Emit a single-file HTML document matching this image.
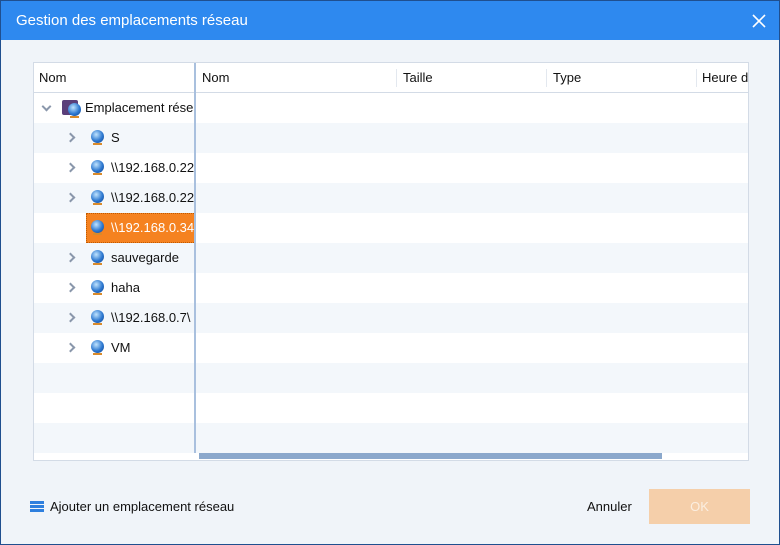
<!DOCTYPE html>
<html><head><meta charset="utf-8"><style>
*{margin:0;padding:0;box-sizing:border-box}
body{width:780px;height:545px;overflow:hidden;font-family:"Liberation Sans",sans-serif;font-size:13px;color:#111}
.win{position:absolute;left:0;top:0;width:780px;height:545px;background:#f0f4f9;border:1px solid #1f4f8f}
.title{position:absolute;left:0;top:0;width:778px;height:39px;background:#2e89ef;color:#fff;font-size:15px;line-height:40px;padding-left:15px}
.x{position:absolute;right:13px;top:13px;width:14px;height:14px}
.tbl{position:absolute;left:32px;top:61px;width:716px;height:399px;background:#fff;border:1px solid #d3dbe6}
.a{position:absolute}
.row{position:absolute;height:30px}
.lt{background:#f3f7fb}
.txt{position:absolute;line-height:30px;white-space:nowrap;overflow:hidden}
.chev{position:absolute;width:7px;height:7px;border-right:2px solid #8a97ab;border-bottom:2px solid #8a97ab;transform:rotate(-45deg)}
.globe{position:absolute;width:13px;height:13px;border-radius:50%;background:radial-gradient(circle at 40% 35%,#bfe3ff,#2d78d0 55%,#0f3f8a)}
.globe:after{content:"";position:absolute;left:2px;top:13px;width:9px;height:2px;background:#d98a2a}
</style></head><body>
<div class="win">
<div class="title">Gestion des emplacements réseau
<svg class="x" viewBox="0 0 14 14"><path d="M1 1L13 13M13 1L1 13" stroke="#fff" stroke-width="1.6"/></svg></div>
<div class="tbl">
<div class="row lt" style="left:0;top:60px;width:714px"></div>
<div class="row lt" style="left:0;top:120px;width:714px"></div>
<div class="row lt" style="left:0;top:180px;width:714px"></div>
<div class="row lt" style="left:0;top:240px;width:714px"></div>
<div class="row lt" style="left:0;top:300px;width:714px"></div>
<div class="row lt" style="left:0;top:360px;width:714px"></div>
<div class="a" style="left:0;top:0;width:714px;height:30px;background:#fff;border-bottom:1px solid #d3dbe6"></div>
<div class="txt" style="left:5px;top:0">Nom</div>
<div class="txt" style="left:168px;top:0">Nom</div>
<div class="a" style="left:362px;top:6px;width:1px;height:18px;background:#e3e8ef"></div>
<div class="txt" style="left:369px;top:0">Taille</div>
<div class="a" style="left:512px;top:6px;width:1px;height:18px;background:#e3e8ef"></div>
<div class="txt" style="left:519px;top:0">Type</div>
<div class="a" style="left:662px;top:6px;width:1px;height:18px;background:#e3e8ef"></div>
<div class="txt" style="left:668px;top:0;width:46px">Heure d</div>
<div class="a" style="left:160px;top:0;width:2px;height:397px;background:#a9c0de"></div>
<div class="a" style="left:0;top:30px;width:160px;height:367px;overflow:hidden">
 <div class="chev" style="left:9px;top:10px;transform:rotate(45deg)"></div>
 <div class="a" style="left:28px;top:7px;width:16px;height:15px;background:#5a3f7a;border-radius:2px"></div>
 <div class="globe" style="left:34px;top:10px"></div>
 <div class="txt" style="left:51px;top:0">Emplacement réseau</div>
 <div class="chev" style="left:33px;top:41px"></div><div class="globe" style="left:57px;top:37px"></div><div class="txt" style="left:77px;top:30px">S</div>
 <div class="chev" style="left:33px;top:71px"></div><div class="globe" style="left:57px;top:67px"></div><div class="txt" style="left:77px;top:60px">\\192.168.0.22</div>
 <div class="chev" style="left:33px;top:101px"></div><div class="globe" style="left:57px;top:97px"></div><div class="txt" style="left:77px;top:90px">\\192.168.0.22</div>
 <div class="a" style="left:52px;top:120px;width:110px;height:30px;background:#f58220;border:1px dotted #c05a00"></div>
 <div class="globe" style="left:57px;top:127px"></div><div class="txt" style="left:77px;top:120px;color:#fff">\\192.168.0.34</div>
 <div class="chev" style="left:33px;top:161px"></div><div class="globe" style="left:57px;top:157px"></div><div class="txt" style="left:77px;top:150px">sauvegarde</div>
 <div class="chev" style="left:33px;top:191px"></div><div class="globe" style="left:57px;top:187px"></div><div class="txt" style="left:77px;top:180px">haha</div>
 <div class="chev" style="left:33px;top:221px"></div><div class="globe" style="left:57px;top:217px"></div><div class="txt" style="left:77px;top:210px">\\192.168.0.7\</div>
 <div class="chev" style="left:33px;top:251px"></div><div class="globe" style="left:57px;top:247px"></div><div class="txt" style="left:77px;top:240px">VM</div>
</div>
<div class="a" style="left:0;top:390px;width:714px;height:7px;background:#fff"></div>
<div class="a" style="left:165px;top:390px;width:463px;height:6px;background:#8ba8cc"></div>
</div>
<div class="a" style="left:29px;top:500px;width:14px;height:12px">
 <div class="a" style="left:0;top:0;width:14px;height:3px;background:#2e7fde"></div>
 <div class="a" style="left:0;top:4px;width:14px;height:3px;background:#2e7fde"></div>
 <div class="a" style="left:0;top:8px;width:14px;height:3px;background:#2e7fde"></div>
</div>
<div class="txt" style="left:49px;top:491px">Ajouter un emplacement réseau</div>
<div class="txt" style="left:586px;top:491px">Annuler</div>
<div class="a" style="left:648px;top:488px;width:101px;height:35px;background:#f5cfaa;color:#fbeee0;text-align:center;line-height:35px">OK</div>
</div>
</body></html>
